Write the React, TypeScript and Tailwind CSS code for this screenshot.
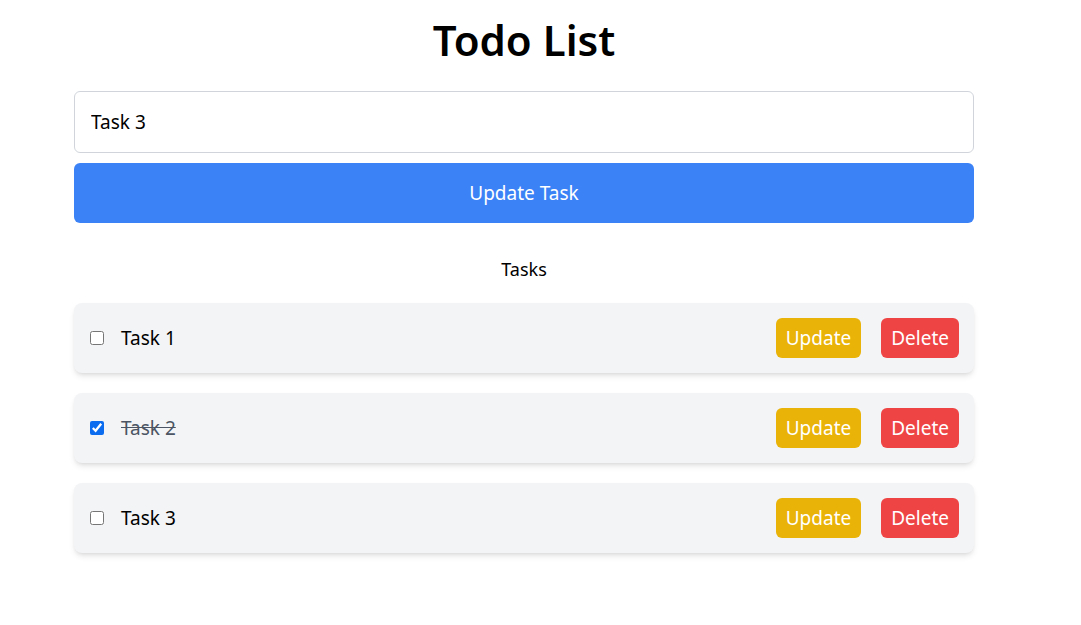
import React, { useState } from 'react';

interface Task {
  id: number;
  text: string;
  done: boolean;
}

export default function App() {
  const [tasks, setTasks] = useState<Task[]>([
    { id: 1, text: 'Task 1', done: false },
    { id: 2, text: 'Task 2', done: true },
    { id: 3, text: 'Task 3', done: false },
  ]);
  const [value, setValue] = useState('Task 3');

  const toggle = (id: number) =>
    setTasks(tasks.map(t => (t.id === id ? { ...t, done: !t.done } : t)));

  return (
    <div className="min-h-screen bg-white text-black font-['Segoe_UI','Noto_Sans',sans-serif]">
      <div className="w-[900px] ml-[74px] pt-[12px]">
        <h1 className="text-[42px] leading-[56px] font-semibold text-center">Todo List</h1>

        <input
          value={value}
          onChange={e => setValue(e.target.value)}
          className="mt-[23px] w-full h-[62px] border border-[#d1d5db] rounded-md px-4 text-[19px] outline-none"
        />
        <button className="mt-[10px] w-full h-[60px] bg-[#3b82f6] text-white rounded-md text-[19px]">
          Update Task
        </button>

        <h2 className="mt-[33px] text-center text-[18px] leading-[26px]">Tasks</h2>

        <ul className="mt-[21px] flex flex-col gap-5">
          {tasks.map(t => (
            <li
              key={t.id}
              className="h-[70px] bg-[#f3f4f6] rounded-lg shadow-md flex items-center pl-4 pr-[15px]"
            >
              <input
                type="checkbox"
                checked={t.done}
                onChange={() => toggle(t.id)}
                className="w-[14px] h-[14px] m-0 accent-[#0b6cf0]"
              />
              <span
                className={
                  'ml-[17px] text-[19px] ' + (t.done ? 'line-through text-[#4b5563]' : '')
                }
              >
                {t.text}
              </span>
              <div className="ml-auto flex gap-5">
                <button className="h-[40px] px-[10px] bg-[#eab308] text-white rounded-md text-[19px]">
                  Update
                </button>
                <button className="h-[40px] px-[10px] bg-[#ef4444] text-white rounded-md text-[19px]">
                  Delete
                </button>
              </div>
            </li>
          ))}
        </ul>
      </div>
    </div>
  );
}
